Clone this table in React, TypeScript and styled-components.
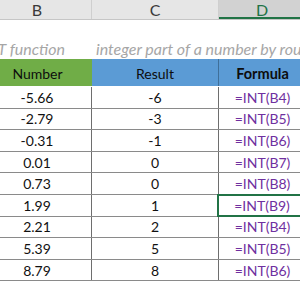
import styled, { createGlobalStyle } from 'styled-components'

const GlobalStyle = createGlobalStyle`
  body {
    margin: 0;
    overflow: hidden;
    background: #fff;
    font-family: Lato, 'Liberation Sans', sans-serif;
  }
`

const rows = [
  { num: '-5.66', res: '-6', ref: 'B4' },
  { num: '-2.79', res: '-3', ref: 'B5' },
  { num: '-0.31', res: '-1', ref: 'B6' },
  { num: '0.01', res: '0', ref: 'B7' },
  { num: '0.73', res: '0', ref: 'B8' },
  { num: '1.99', res: '1', ref: 'B9', selected: true },
  { num: '2.21', res: '2', ref: 'B4' },
  { num: '5.39', res: '5', ref: 'B5' },
  { num: '8.79', res: '8', ref: 'B6' },
]

const App = () => {
  return (
    <>
      <GlobalStyle />
      <Sheet>
        <ColHeaders>
          <ColHead>B</ColHead>
          <ColHead>C</ColHead>
          <ColHead $active>D</ColHead>
        </ColHeaders>
        <Blank />
        <TitleRow>
          <TitleLeft>Excel INT function</TitleLeft>
          <TitleRight>integer part of a number by rounding down</TitleRight>
        </TitleRow>
        <HeadRow>
          <HeadCell $bg="#70ad47">Number</HeadCell>
          <HeadCell $bg="#5b9bd5" $line>Result</HeadCell>
          <HeadCell $bg="#5b9bd5" $bold>Formula</HeadCell>
        </HeadRow>
        {rows.map((r, i) => (
          <DataRow key={i}>
            <Cell $line>{r.num}</Cell>
            <Cell $line>{r.res}</Cell>
            <Cell $formula $selected={r.selected}>{`=INT(${r.ref})`}</Cell>
          </DataRow>
        ))}
      </Sheet>
    </>
  )
}

export default App

const Sheet = styled.div`
  margin-left: -17px;
  width: 323px;
  font-size: 14px;
  color: #111;
`
const ColHeaders = styled.div`
  display: grid;
  grid-template-columns: 109px 127px 1fr;
  height: 19px;
  background: #e6e6e6;
  border-bottom: 1px solid #c6c6c6;
`
const ColHead = styled.div<{ $active?: boolean }>`
  display: flex;
  align-items: center;
  justify-content: center;
  box-sizing: border-box;
  border-right: 1px solid #cfcfcf;
  color: ${({ $active }) => ($active ? '#217346' : '#3a3a3a')};
  background: ${({ $active }) => ($active ? '#d2d2d2' : '#e6e6e6')};
  box-shadow: ${({ $active }) => ($active ? 'inset 0 -2px 0 #217346' : 'none')};
  font-size: 16px;
`
const Blank = styled.div`
  height: 17px;
`
const TitleRow = styled.div`
  display: grid;
  grid-template-columns: 109px 1fr;
  height: 22px;
  align-items: center;
  font-style: italic;
  font-size: 16px;
  color: #a6a6a6;
  white-space: nowrap;
`
const TitleLeft = styled.div`
  display: flex;
  justify-content: flex-end;
  overflow: hidden;
  padding-right: 27px;
`
const TitleRight = styled.div`
  padding-left: 4px;
  overflow: hidden;
`
const HeadRow = styled.div`
  display: grid;
  grid-template-columns: 109px 127px 1fr;
  height: 27px;
  border-bottom: 1px solid #fff;
`
const HeadCell = styled.div<{ $bg: string; $line?: boolean; $bold?: boolean }>`
  display: flex;
  align-items: center;
  justify-content: center;
  padding-top: 2px;
  background: ${({ $bg }) => $bg};
  border-right: ${({ $line }) => ($line ? '1px solid #3f6f99' : 'none')};
  font-weight: ${({ $bold }) => ($bold ? 700 : 400)};
  color: #0d0d0d;
  font-size: ${({ $bold }) => ($bold ? '14.5px' : '14px')};
`
const DataRow = styled.div`
  display: grid;
  grid-template-columns: 109px 127px 1fr;
  height: 21.6px;
  box-sizing: border-box;
  border-bottom: 1px solid #8a8a8a;
`
const Cell = styled.div<{ $line?: boolean; $formula?: boolean; $selected?: boolean }>`
  display: flex;
  align-items: center;
  justify-content: center;
  border-right: ${({ $line }) => ($line ? '1px solid #6e6e6e' : 'none')};
  color: ${({ $formula }) => ($formula ? '#7030a0' : '#111')};
  font-size: 14px;
  position: relative;
  z-index: ${({ $selected }) => ($selected ? 1 : 0)};
  outline: ${({ $selected }) => ($selected ? '2px solid #217346' : 'none')};
  outline-offset: -1px;
  margin-left: ${({ $selected }) => ($selected ? '-1px' : '0')};
`
